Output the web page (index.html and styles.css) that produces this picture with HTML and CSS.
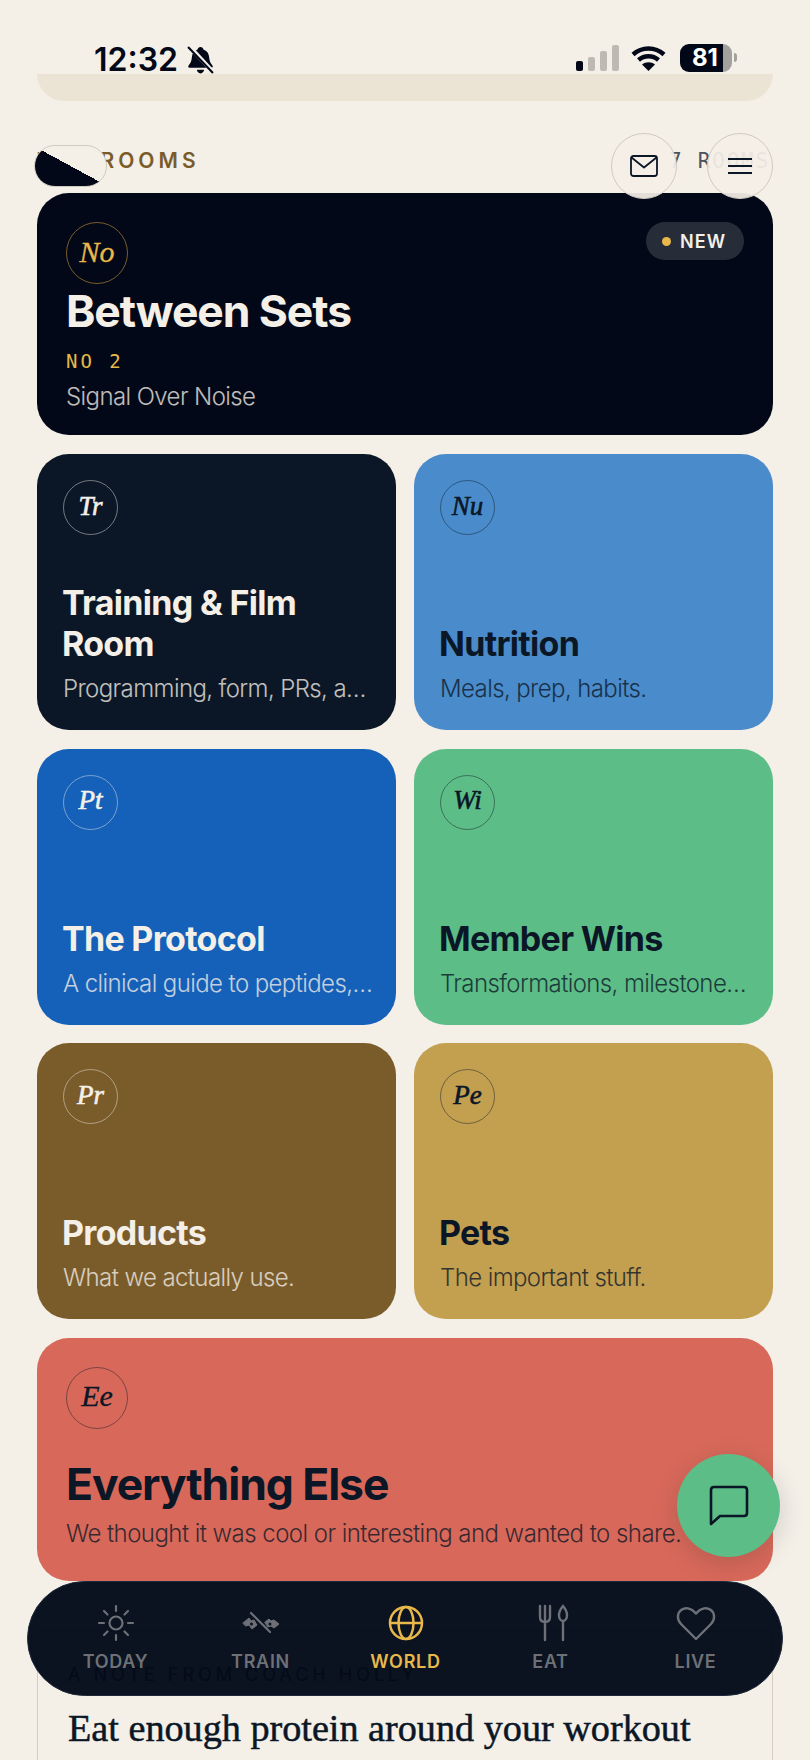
FILE: index.html
```html
<!DOCTYPE html>
<html lang="en">
<head>
    <meta charset="utf-8">
    <meta name="viewport" content="width=device-width, initial-scale=1.0">
    <title>World</title>
    <link rel="stylesheet" href="styles.css">
</head>
<body>
    <div class="status-bar">
        <span class="time">12:32</span>
        <svg class="bell" viewBox="0 0 26 27" width="27" height="28">
            <path fill="#020817" d="M13 1c1.6 0 2.6 1 2.8 2.3 3.4 1 5.2 3.9 5.5 7.4.3 3.6 1 5.600 3.200 8.100.7.900.2 2.200-1 2.200H2.500c-1.200 0-1.700-1.300-1-2.200C3.700 16.300 4.400 14.300 4.700 10.700 5 7.200 6.800 4.300 10.200 3.300 10.400 2 11.400 1 13 1zM9.500 23h7c-.3 2-1.700 3.400-3.500 3.400S9.800 25 9.500 23z"/>
            <path stroke="#f4efe7" stroke-width="4" d="M2 0l24 26"/>
            <path stroke="#020817" stroke-width="2" d="M1 1l24 25"/>
        </svg>
        <div class="status-right">
            <div class="signal">
                <i class="on"></i><i class="b2"></i><i class="b3"></i><i class="b4"></i>
            </div>
            <svg class="wifi" viewBox="0 0 35 26" width="35" height="26">
                <path fill="none" stroke="#020817" stroke-width="4.500" d="M2 9.500c9-8 22-8 31 0M7.500 15c5.800-5 14.200-5 20 0"/>
                <path fill="#020817" d="M17.500 26l-6.500-6.500c3.800-3 9.200-3 13 0z"/>
            </svg>
            <div class="battery">81</div>
        </div>
    </div>

    <div class="top-band"></div>

    <div class="rooms-head">
        <span class="rooms-title">THE ROOMS</span>
        <span class="rooms-count">7 ROOMS</span>
    </div>

    <section class="card card-wide card-black">
        <span class="badge"><i></i>NEW</span>
        <span class="mono mono-big mono-gold">No</span>
        <h2 class="wide-title">Between Sets</h2>
        <div class="issue">NO 2</div>
        <p class="sub">Signal Over Noise</p>
    </section>

    <div class="room-grid">
        <section class="card card-navy">
            <span class="mono">Tr</span>
            <div class="card-text">
                <h3>Training &amp; Film Room</h3>
                <p class="sub">Programming, form, PRs, and more.</p>
            </div>
        </section>
        <section class="card card-blue dark-text">
            <span class="mono">Nu</span>
            <div class="card-text">
                <h3>Nutrition</h3>
                <p class="sub">Meals, prep, habits.</p>
            </div>
        </section>
        <section class="card card-royal">
            <span class="mono">Pt</span>
            <div class="card-text">
                <h3>The Protocol</h3>
                <p class="sub">A clinical guide to peptides, dosing.</p>
            </div>
        </section>
        <section class="card card-green dark-text">
            <span class="mono">Wi</span>
            <div class="card-text">
                <h3>Member Wins</h3>
                <p class="sub">Transformations, milestones, more.</p>
            </div>
        </section>
        <section class="card card-brown">
            <span class="mono">Pr</span>
            <div class="card-text">
                <h3>Products</h3>
                <p class="sub">What we actually use.</p>
            </div>
        </section>
        <section class="card card-gold dark-text">
            <span class="mono">Pe</span>
            <div class="card-text">
                <h3>Pets</h3>
                <p class="sub">The important stuff.</p>
            </div>
        </section>
    </div>

    <section class="card card-wide card-coral dark-text">
        <span class="mono mono-big">Ee</span>
        <h2 class="wide-title else-title">Everything Else</h2>
        <p class="sub else-sub">We thought it was cool or interesting and wanted to share.</p>
    </section>

    <section class="note">
        <div class="note-label">A NOTE FROM COACH HOLLY</div>
        <h2>Eat enough protein around your workout</h2>
    </section>

    <!-- floating stuff -->
    <div class="logo-pill"></div>
    <button class="round-btn mail-btn">
        <svg viewBox="0 0 28 22" width="28" height="22" fill="none" stroke="#0b1726" stroke-width="1.800" stroke-linejoin="round">
            <rect x="1" y="1" width="26" height="20" rx="2.500"/>
            <path d="M1.500 2.500L14 12.500 26.500 2.500"/>
        </svg>
    </button>
    <button class="round-btn menu-btn">
        <svg viewBox="0 0 24 18" width="24" height="18" stroke="#0b1726" stroke-width="1.800">
            <path d="M0 2h24M0 9h24M0 16h24"/>
        </svg>
    </button>

    <button class="chat-btn">
        <svg viewBox="0 0 40 41" width="40" height="41" fill="none" stroke="#0b1726" stroke-width="2.600" stroke-linejoin="round">
            <path d="M5 2h30c1.700 0 3 1.300 3 3v23c0 1.700-1.300 3-3 3H11l-9 8V5c0-1.700 1.300-3 3-3z"/>
        </svg>
    </button>

    <nav class="tab-bar">
        <a class="tab">
            <svg viewBox="0 0 38 38" width="38" height="38" fill="none" stroke="currentColor" stroke-width="2.200" stroke-linecap="round">
                <circle cx="19" cy="19" r="6.500"/>
                <path d="M19 2v5M19 31v5M2 19h5M31 19h5M7 7l3.500 3.500M27.500 27.500L31 31M7 31l3.500-3.500M27.500 10.500L31 7"/>
            </svg>
            <span>TODAY</span>
        </a>
        <a class="tab">
            <svg viewBox="0 0 38 38" width="38" height="38" fill="none" stroke="currentColor" stroke-width="2.200" stroke-linecap="round">
                <path d="M9 9l19 19"/>
                <path fill="currentColor" stroke-width="1" d="M1 19l6-5 2 3 3-1 3 5-5 4-3-4-3 1zM23 18l4-3 2 2 3-1 5 4-5 4-3-2-3 1z"/>
                <circle cx="9.500" cy="20" r="1.500" fill="#0b1221" stroke="none"/>
                <circle cx="28" cy="20" r="1.500" fill="#0b1221" stroke="none"/>
            </svg>
            <span>TRAIN</span>
        </a>
        <a class="tab tab-active">
            <svg viewBox="0 0 38 38" width="38" height="38" fill="none" stroke="currentColor" stroke-width="2.500">
                <circle cx="19" cy="19" r="16"/>
                <ellipse cx="19" cy="19" rx="7.500" ry="16"/>
                <path d="M3 19h32"/>
            </svg>
            <span>WORLD</span>
        </a>
        <a class="tab">
            <svg viewBox="0 0 38 38" width="38" height="38" fill="none" stroke="currentColor" stroke-width="2.400" stroke-linecap="round">
                <path d="M8 2v11c0 3 1.500 5 5 5s5-2 5-5V2M13 2v34"/>
                <path d="M31 2c-2.500 3-4 6-4 9s1.500 6 4 6 4-3 4-6-1.500-6-4-9zM31 17v19"/>
            </svg>
            <span>EAT</span>
        </a>
        <a class="tab">
            <svg viewBox="0 0 40 38" width="40" height="38" fill="none" stroke="currentColor" stroke-width="2.400" stroke-linejoin="round">
                <path d="M20 35L5 20C1 16 1 10 4.500 6.500 8.500 2.800 15 3.500 20 9.500 25 3.500 31.500 2.800 35.500 6.500 39 10 39 16 35 20z"/>
            </svg>
            <span>LIVE</span>
        </a>
    </nav>
</body>
</html>
```

FILE: styles.css
```css
* {
    box-sizing: border-box;
}
html, body {
    margin: 0;
    height: 1760px;
    overflow: hidden;
}
body {
    position: relative;
    padding: 0 37px;
    background: #f4efe7;
    color: #0b1726;
    font-family: Inter, "Noto Sans", sans-serif;
}
h2, h3, p {
    margin: 0;
}

/* status bar */
.status-bar {
    display: flex;
    align-items: flex-start;
    height: 74px;
    padding: 41px 0 0 57px;
}
.time {
    font-size: 32px;
    font-weight: 600;
    line-height: 37px;
    color: #020817;
}
.bell {
    margin: 5px 0 0 9px;
}
.status-right {
    display: flex;
    align-items: flex-start;
    margin-left: auto;
    margin-right: 41px;
    padding-top: 4px;
}
.signal {
    display: flex;
    align-items: flex-end;
    gap: 5px;
    height: 26px;
}
.signal i {
    display: block;
    width: 7px;
    background: #bdbab4;
    border-radius: 2px;
}
.signal .on {
    height: 10px;
    background: #020817;
}
.signal .b2 { height: 14px; }
.signal .b3 { height: 20px; }
.signal .b4 { height: 26px; }
.wifi {
    margin: 0 14px 0 12px;
}
.battery {
    position: relative;
    width: 52px;
    height: 28px;
    margin-top: -1px;
    border-radius: 9px;
    background: linear-gradient(90deg, #020817 83%, #a3a19d 83%);
    color: #fff;
    font-size: 24px;
    font-weight: 700;
    line-height: 28px;
    padding-left: 12px;
}
.battery::after {
    content: "";
    position: absolute;
    right: -5px;
    top: 9px;
    width: 3px;
    height: 9px;
    border-radius: 0 3px 3px 0;
    background: #a3a19d;
}

.top-band {
    height: 27px;
    background: #ebe4d4;
    border-radius: 0 0 28px 28px;
}

.rooms-head {
    display: flex;
    justify-content: space-between;
    align-items: center;
    height: 92px;
    padding-top: 27px;
}
.rooms-title {
    font-size: 21px;
    font-weight: 600;
    letter-spacing: 4px;
    color: #7a5c2b;
}
.rooms-count {
    padding-right: 3px;
    font-family: "DejaVu Sans Mono", monospace;
    font-size: 21px;
    letter-spacing: 1.800px;
    color: #4d535c;
}

/* cards */
.card {
    display: flex;
    flex-direction: column;
    align-items: flex-start;
    min-width: 0;
    min-height: 276px;
    padding: 26px 23px 26px 26px;
    border-radius: 32px;
    color: #f4efe7;
}
.card-wide {
    position: relative;
    min-height: 243px;
    padding: 29px 29px 20px;
}
.card-black { background: #020817; height: 242px; min-height: 0; }
.card-navy { background: #0b1726; }
.card-blue { background: #4a8ccb; }
.card-royal { background: #1560b9; }
.card-green { background: #5dbd87; }
.card-brown { background: #7a5c2b; }
.card-gold { background: #c39f50; }
.card-coral { background: #d8695a; }
.dark-text { color: #0b1726; }

.room-grid {
    display: grid;
    grid-template-columns: minmax(0, 1fr) minmax(0, 1fr);
    gap: 18.500px 18px;
    margin: 19px 0 18.500px;
}
.mono {
    display: flex;
    align-items: center;
    justify-content: center;
    flex: none;
    width: 55px;
    height: 55px;
    padding-bottom: 3px;
    border: 1.500px solid rgba(244, 239, 231, 0.45);
    border-radius: 50%;
    font-family: "Liberation Serif", serif;
    font-style: italic;
    font-size: 27px;
    -webkit-text-stroke: 0.6px currentColor;
}
.dark-text .mono {
    border-color: rgba(11, 23, 38, 0.45);
}
.mono-big {
    width: 62px;
    height: 62px;
    font-size: 30px;
    -webkit-text-stroke: 0.3px currentColor;
}
.mono-gold {
    color: #e8b84a;
    border-color: #7a5c2b;
}
.card-text {
    width: 100%;
    margin-top: auto;
}
.card-text h3 {
    margin-left: -1px;
    font-size: 34px;
    font-weight: 700;
    line-height: 41px;
    letter-spacing: -0.700px;
}
.sub {
    width: 100%;
    font-size: 24px;
    font-weight: 300;
    line-height: 30px;
    letter-spacing: -0.600px;
    margin-top: 10px;
    opacity: 0.78;
    white-space: nowrap;
    overflow: hidden;
    text-overflow: ellipsis;
}
.wide-title {
    margin-top: 1px;
    font-size: 44.500px;
    font-weight: 700;
    line-height: 52px;
    letter-spacing: -1.100px;
}
.issue {
    margin-top: 13px;
    font-family: "DejaVu Sans Mono", monospace;
    font-size: 19px;
    line-height: 22px;
    letter-spacing: 3px;
    color: #e8b84a;
}
.card-black .sub {
    margin-top: 10px;
}
.badge {
    position: absolute;
    top: 29px;
    right: 29px;
    display: flex;
    align-items: center;
    gap: 9px;
    height: 38px;
    padding: 0 18px 0 16px;
    border-radius: 19px;
    background: rgba(255, 255, 255, 0.15);
    font-size: 18px;
    font-weight: 600;
    letter-spacing: 1px;
}
.badge i {
    width: 9px;
    height: 9px;
    border-radius: 50%;
    background: #e8b84a;
}
.else-title {
    margin-top: 29px;
}
.else-sub {
    margin-top: 9px;
    letter-spacing: -0.550px;
    overflow: visible;
}

/* note under the tab bar */
.note {
    height: 300px;
    margin-top: 50px;
    padding: 32px 30px 0;
    border: 1.500px solid #d5cdbd;
}
.note-label {
    font-size: 18px;
    letter-spacing: 4px;
    color: #020817;
}
.note h2 {
    margin-top: 22px;
    font-family: "Liberation Serif", serif;
    font-size: 38.200px;
    font-weight: 400;
    line-height: 42px;
    -webkit-text-stroke: 0.5px currentColor;
    white-space: nowrap;
}

/* floating */
.logo-pill {
    position: absolute;
    left: 34px;
    top: 145px;
    width: 73px;
    height: 42px;
    border: 1.500px solid #cfcbc3;
    border-radius: 21px;
    background: linear-gradient(208.500deg, #f4efe7 50%, #020817 50%);
}
.round-btn {
    position: absolute;
    top: 133px;
    display: flex;
    align-items: center;
    justify-content: center;
    width: 66px;
    height: 66px;
    padding: 0;
    border: 1.500px solid #cfcbc3;
    border-radius: 50%;
    background: rgba(244, 239, 231, 0.93);
}
.mail-btn { left: 611px; }
.menu-btn { left: 707px; }
.chat-btn {
    position: absolute;
    left: 677px;
    top: 1454px;
    display: flex;
    align-items: center;
    justify-content: center;
    width: 103px;
    height: 103px;
    padding: 0;
    border: none;
    border-radius: 50%;
    background: #5dbd87;
    box-shadow: 0 6px 26px rgba(11, 23, 38, 0.16);
}
.tab-bar {
    position: absolute;
    left: 27px;
    top: 1581px;
    display: grid;
    grid-template-columns: repeat(5, 145px);
    width: 756px;
    height: 115px;
    padding: 22px 15px 0;
    border: 1.500px solid #1e2a3b;
    border-radius: 58px;
    background: rgba(3, 10, 25, 0.97);
}
.tab {
    display: flex;
    flex-direction: column;
    align-items: center;
    gap: 9px;
    color: #6d7177;
    font-size: 18px;
    font-weight: 600;
    letter-spacing: 0.700px;
    line-height: 22px;
}
.tab-active {
    color: #e8b84a;
}
```
